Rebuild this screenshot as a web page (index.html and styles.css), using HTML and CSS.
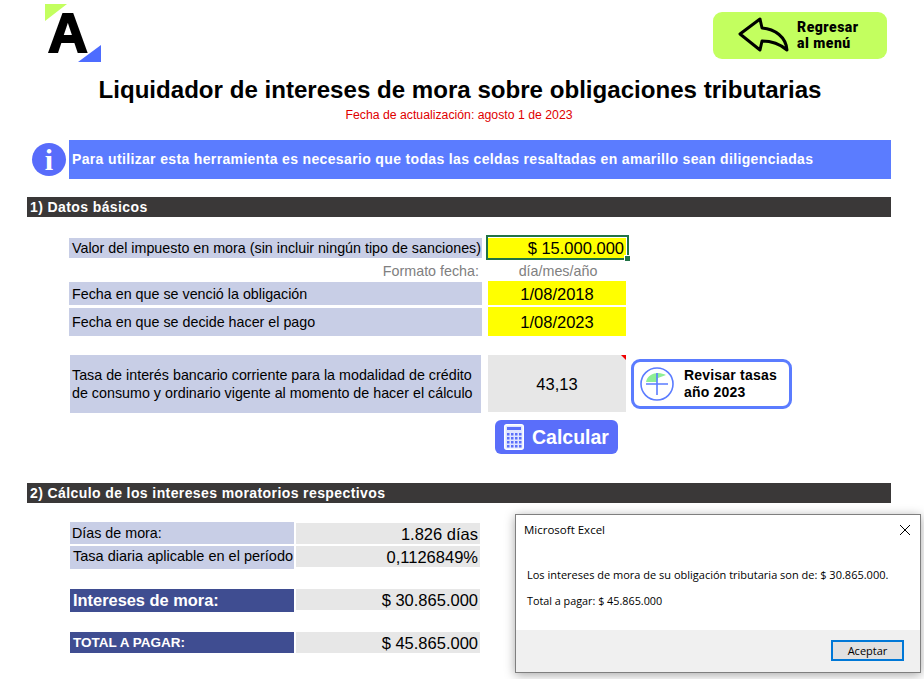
FILE: index.html
```html
<!DOCTYPE html>
<html lang="en">
<head>
  <meta charset="UTF-8">
  <meta name="viewport" content="width=device-width, initial-scale=1.0">
  <title>Liquidador de intereses de mora</title>
  <link rel="stylesheet" href="styles.css">
</head>
<body>
  <div class="page">
    <!-- Header -->
    <header class="top">
      <svg class="logo" width="56" height="66" viewBox="0 -4 56 66">
        <polygon points="0,0 22,0 0,17" fill="#c3ff5f"/>
        <text x="3" y="48" class="logo-letter">A</text>
        <polygon points="56,41 56,58 33,58" fill="#4d6cff"/>
      </svg>
      <a class="back-btn" href="#">
        <svg width="52" height="36" viewBox="0 0 52 36">
          <path d="M2 17 L22 2 L24 11 C37 12 48 20 49 33 C42 27 34 24 24 24 L22 33 Z" fill="none" stroke="#000" stroke-width="3" stroke-linejoin="round"/>
        </svg>
        <span>Regresar<br>al menú</span>
      </a>
    </header>

    <h1 class="title">Liquidador de intereses de mora sobre obligaciones tributarias</h1>
    <p class="updated">Fecha de actualización: agosto 1 de 2023</p>

    <div class="notice">
      <div class="info-icon">i</div>
      <div class="notice-text">Para utilizar esta herramienta es necesario que todas las celdas resaltadas en amarillo sean diligenciadas</div>
    </div>

    <!-- Section 1 -->
    <h2 class="section-bar first">1) Datos básicos</h2>

    <div class="row row-value">
      <div class="label">Valor del impuesto en mora (sin incluir ningún tipo de sanciones)</div>
      <div class="cell input right selected">$ 15.000.000<span class="sel-box"></span></div>
    </div>
    <div class="row row-hint">
      <div class="hint right">Formato fecha:</div>
      <div class="hint center">día/mes/año</div>
    </div>
    <div class="row row-date1">
      <div class="label">Fecha en que se venció la obligación</div>
      <div class="cell input center">1/08/2018</div>
    </div>
    <div class="row row-date2">
      <div class="label">Fecha en que se decide hacer el pago</div>
      <div class="cell input center">1/08/2023</div>
    </div>

    <div class="rate-row">
      <div class="label rate-label">Tasa de interés bancario corriente para la modalidad de crédito<br>de consumo y ordinario vigente al momento de hacer el cálculo</div>
      <div class="cell rate-value center">43,13<span class="comment-mark"></span></div>
      <a class="rates-btn" href="#">
        <svg width="36" height="36" viewBox="0 0 36 36">
          <path d="M7 16 C8 10 14 7 19 7 C22 7 25 8 27 9 L19 12 L18 16 Z" fill="#8fef96"/>
          <circle cx="18" cy="18" r="16" fill="none" stroke="#5b7cff" stroke-width="1.6"/>
          <path d="M18 7 V29 M7 18 H29" stroke="#5b7cff" stroke-width="1.6" fill="none"/>
        </svg>
        <span>Revisar tasas<br>año 2023</span>
      </a>
    </div>

    <a class="calc-btn" href="#">
      <svg width="20" height="26" viewBox="0 0 20 26">
        <rect x="0.75" y="0.75" width="18.5" height="24.5" rx="2" fill="#dfe4ff" stroke="#fff" stroke-width="1.5"/>
        <rect x="3" y="3" width="14" height="3" fill="#5a6efa"/>
        <g fill="#5a6efa">
          <rect x="3" y="9" width="2.5" height="2.5"/><rect x="7" y="9" width="2.5" height="2.5"/><rect x="11" y="9" width="2.5" height="2.5"/><rect x="15" y="9" width="2.5" height="2.5"/>
          <rect x="3" y="13" width="2.5" height="2.5"/><rect x="7" y="13" width="2.5" height="2.5"/><rect x="11" y="13" width="2.5" height="2.5"/><rect x="15" y="13" width="2.5" height="2.5"/>
          <rect x="3" y="17" width="2.5" height="2.5"/><rect x="7" y="17" width="2.5" height="2.5"/><rect x="11" y="17" width="2.5" height="2.5"/><rect x="15" y="17" width="2.5" height="2.5"/>
          <rect x="3" y="21" width="2.5" height="2.5"/><rect x="7" y="21" width="2.5" height="2.5"/><rect x="11" y="21" width="2.5" height="2.5"/><rect x="15" y="21" width="2.5" height="2.5"/>
        </g>
      </svg>
      <span>Calcular</span>
    </a>

    <!-- Section 2 -->
    <h2 class="section-bar second">2) Cálculo de los intereses moratorios respectivos</h2>

    <div class="result result-days">
      <div class="label">Días de mora:</div>
      <div class="cell output right">1.826 días</div>
    </div>
    <div class="result result-rate">
      <div class="label rate-daily">Tasa diaria aplicable en el período</div>
      <div class="cell output right">0,1126849%</div>
    </div>
    <div class="result result-interest">
      <div class="label dark big">Intereses de mora:</div>
      <div class="cell output right">$ 30.865.000</div>
    </div>
    <div class="result result-total">
      <div class="label dark">TOTAL A PAGAR:</div>
      <div class="cell output right">$ 45.865.000</div>
    </div>

    <!-- Excel message box -->
    <div class="dialog">
      <div class="dialog-head">
        <span>Microsoft Excel</span>
        <svg width="12" height="12" viewBox="0 0 12 12">
          <path d="M1 1 L11 11 M11 1 L1 11" stroke="#000" stroke-width="1" fill="none"/>
        </svg>
      </div>
      <div class="dialog-body">
        <p>Los intereses de mora de su obligación tributaria son de: $ 30.865.000.</p>
        <p>Total a pagar: $ 45.865.000</p>
      </div>
      <div class="dialog-foot">
        <button class="dialog-btn">Aceptar</button>
      </div>
    </div>
  </div>
</body>
</html>
```

FILE: styles.css
```css
* {
  box-sizing: border-box;
}

body {
  margin: 0;
  background: #fff;
  font-family: "Liberation Sans", Arial, sans-serif;
  color: #000;
}

.page {
  position: relative;
  width: 924px;
  height: 679px;
  overflow: hidden;
}

/* Header */
.top {
  display: flex;
  justify-content: space-between;
  align-items: flex-start;
  padding: 0 37px 0 45px;
}

.logo {
  display: block;
}

.logo-letter {
  font-family: "Liberation Sans", Arial, sans-serif;
  font-weight: bold;
  font-size: 55px;
  fill: #000;
  stroke: #000;
  stroke-width: 2px;
}

.back-btn {
  display: flex;
  align-items: center;
  width: 174px;
  height: 47px;
  margin-top: 12px;
  padding: 0 0 2px 25px;
  gap: 7px;
  background: #c3ff5f;
  border-radius: 9px;
  color: #000;
  text-decoration: none;
  font-family: Roboto, sans-serif;
  font-weight: 900;
  font-size: 14px;
  letter-spacing: 0.5px;
  line-height: 16px;
}

.title {
  margin: 10px 0 0;
  text-align: center;
  font-size: 24.1px;
  line-height: 28px;
  font-weight: bold;
  padding-right: 4px;
}

.updated {
  margin: 3px 0 0;
  text-align: center;
  color: #e00000;
  font-size: 12.27px;
  line-height: 16px;
  padding-right: 6px;
}

/* Info banner */
.notice {
  display: flex;
  align-items: center;
  gap: 3px;
  margin: 17px 33px 0 32px;
}

.info-icon {
  width: 34px;
  height: 33px;
  border-radius: 50%;
  background: #586cfb;
  color: #fff;
  text-align: center;
  font-family: "Liberation Serif", serif;
  font-weight: bold;
  font-size: 30px;
  line-height: 33px;
}

.notice-text {
  flex: 1;
  height: 39px;
  padding-left: 3px;
  background: #5b7cff;
  color: #fff;
  font-weight: bold;
  font-size: 14px;
  letter-spacing: 0.35px;
  line-height: 39px;
}

/* Section bars */
.section-bar {
  height: 20px;
  margin: 0 33px 0 27px;
  padding-left: 3px;
  background: #3a3838;
  color: #fff;
  font-size: 14px;
  font-weight: bold;
  letter-spacing: 0.4px;
  line-height: 20px;
}

.section-bar.first {
  margin-top: 18px;
}

.section-bar.second {
  margin-top: 29px;
}

/* Shared cells */
.label {
  padding-left: 3px;
  background: #c8cee6;
  font-size: 14.3px;
  white-space: nowrap;
}

.cell {
  font-size: 16.5px;
}

.right {
  text-align: right;
}

.center {
  text-align: center;
}

.input {
  background: #ffff00;
}

.output {
  background: #e7e7e7;
}

/* Section 1 rows */
.row {
  display: grid;
  grid-template-columns: 413px 138px;
  column-gap: 6px;
  margin-left: 69px;
  align-items: end;
}

.row-value {
  margin-top: 21px;
  height: 20px;
  line-height: 20px;
}

.row-value .cell {
  position: relative;
  height: 20px;
  padding-right: 2px;
}

.sel-box {
  position: absolute;
  top: -3px;
  left: -2px;
  right: -3px;
  bottom: -2px;
  border: 2px solid #217346;
}

.sel-box::after {
  content: "";
  position: absolute;
  right: -3px;
  bottom: -3px;
  width: 5px;
  height: 5px;
  background: #217346;
  border: 1px solid #fff;
  border-width: 1px 0 0 1px;
}

.row-hint {
  height: 23px;
  line-height: 27px;
  color: #808080;
  font-size: 14.3px;
}

.row-hint .right {
  padding-right: 3px;
}

.row-hint .center {
  padding-left: 2px;
}

.row-date1 {
  height: 24px;
}

.row-date1 .label {
  height: 23px;
  line-height: 25px;
}

.row-date1 .cell {
  height: 24px;
  line-height: 27px;
}

.row-date2 {
  margin-top: 2px;
  height: 29px;
}

.row-date2 .label {
  height: 28px;
  line-height: 28px;
}

.row-date2 .cell {
  height: 29px;
  line-height: 30px;
}

/* Rate row */
.rate-row {
  display: flex;
  align-items: flex-start;
  margin: 19px 0 0 70px;
}

.rate-label {
  width: 411px;
  height: 58px;
  padding: 11px 0 0 2px;
  line-height: 18px;
}

.rate-value {
  position: relative;
  width: 138px;
  height: 57px;
  margin: 0 5px 0 7px;
  background: #e7e7e7;
  line-height: 59px;
}

.comment-mark {
  position: absolute;
  top: 0;
  right: 0;
  border-top: 5px solid #f00000;
  border-left: 5px solid transparent;
}

.rates-btn {
  display: flex;
  align-items: center;
  gap: 9px;
  width: 161px;
  height: 50px;
  margin-top: 4px;
  padding-left: 5px;
  background: #fff;
  border: 3px solid #5b7cff;
  border-radius: 9px;
  color: #000;
  text-decoration: none;
  font-weight: bold;
  font-size: 14px;
  letter-spacing: 0.2px;
  line-height: 17px;
}

.calc-btn {
  display: flex;
  align-items: center;
  gap: 8px;
  width: 123px;
  height: 34px;
  margin: 7px 0 0 495px;
  padding-left: 9px;
  background: #5a6efa;
  border-radius: 6px;
  color: #fff;
  text-decoration: none;
  font-weight: bold;
  font-size: 19.5px;
}

.calc-btn span {
  margin-top: 1px;
}

/* Section 2 rows */
.result {
  display: grid;
  grid-template-columns: 224px 184px;
  column-gap: 2px;
  margin-left: 70px;
  align-items: start;
}

.result .label {
  padding-left: 2px;
}

.result .cell {
  height: 21px;
  padding-right: 2px;
  line-height: 23px;
}

.result-days {
  margin-top: 19px;
}

.result-days .label {
  height: 22px;
  line-height: 23px;
}

.result-days .cell {
  margin-top: 1px;
}

.result-rate {
  margin-top: 2px;
}

.result .rate-daily {
  height: 23px;
  padding-left: 3px;
  font-size: 14.5px;
  line-height: 21px;
}

.result-interest {
  margin-top: 20px;
}

.result-total {
  margin-top: 20px;
}

.result .label.dark {
  padding-left: 3px;
  background: #3f4d91;
  color: #fff;
  font-weight: bold;
  font-size: 13.5px;
  height: 21px;
  line-height: 22px;
}

.result .label.big {
  height: 23px;
  line-height: 23px;
  font-size: 16.4px;
}

/* Message box */
.dialog {
  position: absolute;
  top: 514px;
  left: 515px;
  width: 406px;
  height: 159px;
  display: flex;
  flex-direction: column;
  background: #fff;
  border: 1px solid #7f7f7f;
  box-shadow: 0 2px 10px rgba(0, 0, 0, 0.35);
  font-family: "Open Sans", "Noto Sans", sans-serif;
  font-size: 11px;
  color: #000;
}

.dialog-head {
  display: flex;
  justify-content: space-between;
  align-items: center;
  padding: 7px 9px 0 8px;
  font-size: 11.5px;
}

.dialog-body {
  flex: 1;
  padding: 0 0 0 11px;
}

.dialog-body p {
  margin: 30px 0 0;
  line-height: 16px;
}

.dialog-body p + p {
  margin-top: 10px;
  font-size: 10.8px;
}

.dialog-foot {
  display: flex;
  justify-content: flex-end;
  align-items: flex-start;
  height: 42px;
  padding: 10px 16px 0 0;
  background: #f0f0f0;
}

.dialog-btn {
  width: 73px;
  height: 21px;
  padding: 0;
  background: #e1e1e1;
  border: 2px solid #0078d7;
  font-family: inherit;
  font-size: 11px;
  color: #000;
}
```
